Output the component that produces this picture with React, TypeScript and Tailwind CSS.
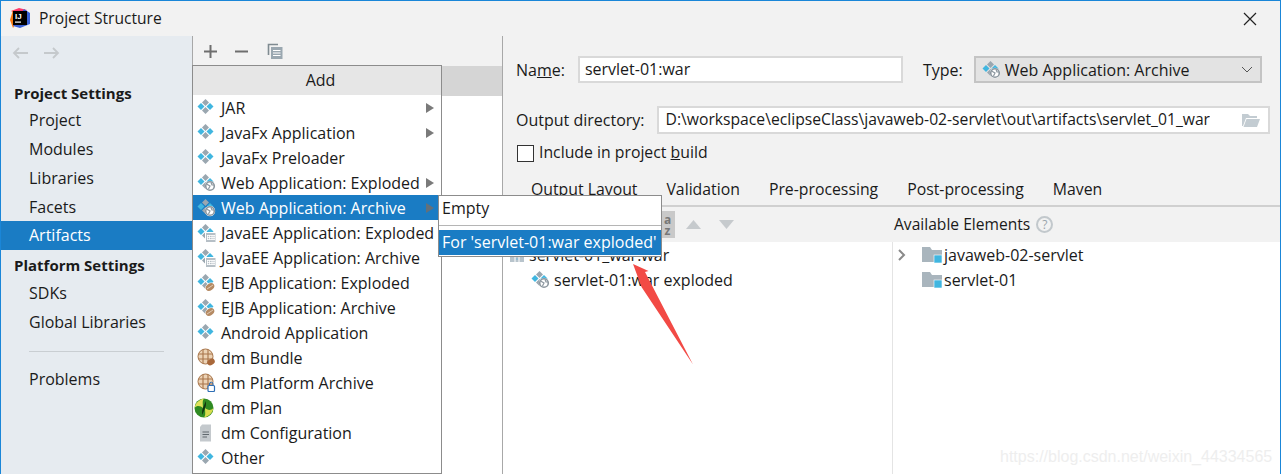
import React from "react";

const F = "font-['Open_Sans','Noto_Sans',sans-serif]";

function Diamonds() {
  const g = "#9aa7b0";
  const b = "#40b6e0";
  return (
    <g>
      <path d="M8.5 1 L12 4.5 L8.5 8 L5 4.5Z" fill={g} />
      <path d="M8.5 9 L12 12.5 L8.5 16 L5 12.5Z" fill={g} />
      <path d="M4 5 L7.5 8.5 L4 12 L0.5 8.5Z" fill={b} />
      <path d="M13 5 L16.5 8.5 L13 12 L9.5 8.5Z" fill={b} />
    </g>
  );
}

function Icon({ kind }: { kind: string }) {
  if (kind === "plan")
    return (
      <svg width="20" height="20" viewBox="0 0 20 20" className="shrink-0 -ml-[3px] mr-[1px]">
        <circle cx="10" cy="10" r="9.5" fill="#2f8a22" />
        <path d="M10 .5 C5 1.5 1.5 5 .5 10 C3 7 7 8 9 10 C9 6 8 3 10 .5Z" fill="#dfe25a" />
        <path d="M10 19.5 C15 18.5 18.5 15 19.5 10 C17 13 13 12 11 10 C11 14 12 17 10 19.5Z" fill="#d7dc4e" />
        <path d="M9 10 C10 7 11 5 12 3 C12 7 12 8 11 10 C10 13 9 15 8 17 C8 14 8 12 9 10Z" fill="#10330f" />
      </svg>
    );
  if (kind === "conf")
    return (
      <svg width="17" height="18" viewBox="0 0 17 18" className="shrink-0">
        <path d="M5 0.5 H14 V17.5 H3 V3Z" fill="#c4c9cd" />
        <path d="M5.5 8 H12 M5.5 10.5 H12 M5.5 13 H10" stroke="#60686e" strokeWidth="1.1" />
      </svg>
    );
  if (kind === "bundle" || kind === "platform")
    return (
      <svg width="19" height="19" viewBox="0 0 19 19" className="shrink-0">
        <circle cx="8.5" cy="8.5" r="7.5" fill="#ecd3b6" stroke="#a8754a" strokeWidth="1" />
        <path d="M6 1.5 V15.5 M11 1.5 V15.5 M1.5 6 H15.5 M1.5 11 H15.5" stroke="#a8754a" strokeWidth="1.1" />
        {kind === "bundle" ? (
          <ellipse cx="14" cy="14" rx="4" ry="3" fill="#a9683a" transform="rotate(-30 14 14)" />
        ) : (
          <g>
            <rect x="11" y="12.5" width="6.5" height="6" rx="1" fill="#fff" stroke="#2f6fb5" strokeWidth="1.2" />
            <path d="M12.5 12.5 V11 a1.8 1.8 0 0 1 3.6 0 V12.5" fill="none" stroke="#2f6fb5" />
          </g>
        )}
      </svg>
    );
  return (
    <svg width="19" height="19" viewBox="0 0 19 19" className="shrink-0">
      <Diamonds />
      {kind === "web" && (
        <g>
          <circle cx="13" cy="13" r="5.2" fill="#fff" />
          <circle cx="13" cy="13" r="4.3" fill="none" stroke="#8c979f" strokeWidth="1.6" />
          <path d="M9.5 11 L13 13 L11.5 16 M14 9.5 L15 12 L17 12" stroke="#8c979f" strokeWidth="1.2" fill="none" />
        </g>
      )}
      {kind === "ee" && (
        <g>
          <rect x="8" y="9" width="10.5" height="10" fill="#fff" />
          <rect x="9" y="10" width="9.5" height="9" fill="#b6bfc6" />
          <path d="M10.5 12 V17 M12.5 12 V17 M15 12 V17 M17 12 V17 M10 12.5 H18 M10 14.5 H18 M10 16.5 H18" stroke="#fff" strokeWidth="0.8" />
        </g>
      )}
      {kind === "ejb" && (
        <g>
          <ellipse cx="13" cy="14" rx="5.2" ry="4" fill="#fff" transform="rotate(-35 13 14)" />
          <ellipse cx="13" cy="14" rx="4.6" ry="3.4" fill="#b58a63" transform="rotate(-35 13 14)" />
          <path d="M10 16 L16 12" stroke="#e6d3c0" strokeWidth="0.9" />
        </g>
      )}
    </svg>
  );
}

const menu: [string, string, boolean?][] = [
  ["JAR", "d", true],
  ["JavaFx Application", "d", true],
  ["JavaFx Preloader", "d"],
  ["Web Application: Exploded", "web", true],
  ["Web Application: Archive", "web", true],
  ["JavaEE Application: Exploded", "ee"],
  ["JavaEE Application: Archive", "ee"],
  ["EJB Application: Exploded", "ejb"],
  ["EJB Application: Archive", "ejb"],
  ["Android Application", "d"],
  ["dm Bundle", "bundle"],
  ["dm Platform Archive", "platform"],
  ["dm Plan", "plan"],
  ["dm Configuration", "conf"],
  ["Other", "d"],
];

function Side({ t, sel, short }: { t: string; sel?: boolean; short?: boolean }) {
  return (
    <div className={`${short ? "h-[28px]" : "h-[29px]"} leading-[28px] pl-[28px] text-[16px] ${sel ? "bg-[#1a7cc4] text-white" : "text-[#1a1a1a]"}`}>{t}</div>
  );
}

function Folder() {
  return (
    <svg width="21" height="17" viewBox="0 0 21 17" className="shrink-0">
      <path d="M0 1 H8 L10 4 H20 V16 H0Z" fill="#a9b5bd" />
      <rect x="12" y="9" width="8" height="8" fill="#40b6e0" stroke="#fff" strokeWidth="0.6" />
    </svg>
  );
}

export default function App() {
  return (
    <div className={`relative w-[1281px] h-[474px] overflow-hidden flex flex-col bg-[#f2f2f2] border-x border-x-[#1a86d8] border-t border-t-[#1a86d8] text-[#1a1a1a] ${F}`}>
      {/* title bar */}
      <div className="h-[35px] shrink-0 flex items-center pl-[9px] pr-[23px] bg-[#f2f2f2]">
        <svg width="21" height="21" viewBox="0 0 21 21" className="shrink-0">
          <path d="M1 3 L9 0 L17 2 L10 8Z" fill="#fd3a6a" />
          <path d="M0 12 L3 2 L9 10 L3 20Z" fill="#f97a12" />
          <path d="M14 1 L20 5 L20 16 L10 20 L3 18 Z" fill="#3a62d8" />
          <path d="M3 3 L17 3 L17 17 L3 17Z" fill="#000" />
          <text x="5" y="11" fontSize="8" fontWeight="700" fill="#fff" fontFamily="Liberation Sans, sans-serif">IJ</text>
          <rect x="5" y="13.5" width="6" height="1.2" fill="#fff" />
        </svg>
        <span className="ml-[8px] text-[15.6px]">Project Structure</span>
        <svg width="14" height="14" viewBox="0 0 14 14" className="ml-auto">
          <path d="M1 1 L13 13 M13 1 L1 13" stroke="#222" strokeWidth="1.2" />
        </svg>
      </div>

      <div className="flex-1 flex min-h-0">
        {/* sidebar */}
        <div className="w-[192px] shrink-0 bg-[#e6ebf0] border-r border-r-[#a8a8a8] flex flex-col">
          <div className="h-[30px] flex items-center pl-[11px] gap-[16px] pt-[4px]">
            <svg width="16" height="14" viewBox="0 0 16 14"><path d="M16 7 H2 M7 2 L2 7 L7 12" stroke="#c5c9cc" strokeWidth="1.8" fill="none" /></svg>
            <svg width="16" height="14" viewBox="0 0 16 14"><path d="M0 7 H14 M9 2 L14 7 L9 12" stroke="#c5c9cc" strokeWidth="1.8" fill="none" /></svg>
          </div>
          <div className="mt-[12px] pl-[13px] text-[15px] font-bold leading-[30px] h-[28px]">Project Settings</div>
          <Side t="Project" />
          <Side t="Modules" />
          <Side t="Libraries" />
          <Side t="Facets" short />
          <Side t="Artifacts" sel />
          <div className="pl-[13px] text-[15px] font-bold leading-[30px] h-[29px]">Platform Settings</div>
          <Side t="SDKs" />
          <Side t="Global Libraries" />
          <div className="mx-[28px] mt-[14px] mb-[13px] h-px bg-[#c9ced2]" />
          <Side t="Problems" />
        </div>

        {/* middle */}
        <div className="w-[310px] shrink-0 bg-white border-r border-r-[#a8a8a8] flex flex-col">
          <div className="h-[30px] bg-[#f2f2f2] flex items-center pl-[9px] gap-[14px]">
            <svg width="17" height="17" viewBox="0 0 17 17"><path d="M8.5 2 V15 M2 8.5 H15" stroke="#6e6e6e" strokeWidth="2" /></svg>
            <svg width="17" height="17" viewBox="0 0 17 17"><path d="M2 8.5 H15" stroke="#6e6e6e" strokeWidth="2" /></svg>
            <svg width="17" height="17" viewBox="0 0 17 17" className="ml-[3px]"><path d="M1.5 12 V1.5 H11" fill="none" stroke="#7f8b91" strokeWidth="1.6" /><rect x="4" y="4" width="11.5" height="12" fill="#9aa7b0" /><path d="M6 7.5 H13.5 M6 10 H13.5 M6 12.5 H13.5" stroke="#fff" strokeWidth="1.1" /></svg>
          </div>
          <div className="h-[30px] bg-[#d5d5d5]" />
        </div>

        {/* right */}
        <div className="flex-1 flex flex-col min-w-0 text-[16px]">
          <div className="h-[169px] shrink-0 pl-[13px] pr-[10px] flex flex-col">
            <div className="mt-[20px] flex items-center h-[27px]">
              <span>Na<u>m</u>e:</span>
              <div className="ml-[13px] w-[325px] h-[27px] bg-white border-2 border-[#d9d9d9] pl-[5px] leading-[23px]">servlet-01:war</div>
              <span className="ml-[20px]">Type:</span>
              <div className="ml-[11px] w-[288px] h-[27px] bg-[#e3e3e3] border-2 border-[#c4c4c4] flex items-center pl-[6px]">
                <Icon kind="web" />
                <span className="ml-[4px]">Web Application: Archive</span>
                <svg width="12" height="8" viewBox="0 0 12 8" className="ml-auto mr-[7px]"><path d="M1 1 L6 6 L11 1" stroke="#555" fill="none" /></svg>
              </div>
            </div>
            <div className="mt-[23px] flex items-center h-[28px]">
              <span>Output directory:</span>
              <div className="ml-[12px] flex-1 h-[28px] bg-white border-2 border-[#d9d9d9] pl-[7px] pr-[8px] flex items-center">
                <span className="truncate text-[15.7px]">D:\workspace\eclipseClass\javaweb-02-servlet\out\artifacts\servlet_01_war</span>
                <svg width="18" height="14" viewBox="0 0 18 14" className="ml-auto shrink-0"><path d="M0 1 H6 L8 3 H15 V5 H4 L1 13 H0Z" fill="#c3ccd2" /><path d="M4.5 6 H18 L15 14 H1.5Z" fill="#c3ccd2" /></svg>
              </div>
            </div>
            <div className="mt-[10px] ml-[1px] flex items-center h-[18px]">
              <div className="w-[17px] h-[17px] bg-white border border-[#333]" />
              <span className="ml-[5px] text-[15.8px]">Include in project <u>b</u>uild</span>
            </div>
            <div className="mt-[17px] flex pl-[15px] gap-[29px] h-[20px] leading-[20px] text-[15.8px]">
              <span>Output Layout</span>
              <span>Validation</span>
              <span>Pre-processing</span>
              <span>Post-processing</span>
              <span>Maven</span>
            </div>
          </div>
          <div className="border-t-2 border-t-[#d0d0d0] flex-1 flex flex-col min-h-0">
            <div className="h-[35px] shrink-0 flex">
              <div className="w-[390px] flex items-center pl-[172px] gap-[11px]">
                <div className="w-[15px] h-[27px] bg-[#c9c9c9] -ml-[15px] text-[12px] leading-[11px] font-bold text-[#777] text-center pt-[3px]">a<br />z</div>
                <svg width="15" height="9" viewBox="0 0 15 9"><path d="M7.5 0 L15 9 H0Z" fill="#c6cacd" /></svg>
                <svg width="15" height="9" viewBox="0 0 15 9" className="ml-[7px]"><path d="M0 0 H15 L7.5 9Z" fill="#c6cacd" /></svg>
              </div>
              <div className="flex items-center pl-[1px]">
                <span className="text-[15.6px]">Available Elements</span>
                <span className="ml-[6px] w-[17px] h-[17px] rounded-full border-2 border-[#c2c8cc] text-[12px] leading-[13px] text-[#9aa4ab] text-center">?</span>
              </div>
            </div>
            <div className="flex-1 bg-white flex">
              <div className="w-[390px] border-r border-r-[#e4e4e4]">
                <div className="h-[25px] flex items-center pl-[6px]">
                  <svg width="16" height="16" viewBox="0 0 16 16" className="shrink-0"><rect x="1" y="1" width="14" height="14" fill="#b8c4cc" /><path d="M6 1 V15 M10 1 V15" stroke="#fff" /><path d="M7 3 H9 M7 6 H9 M7 9 H9 M7 12 H9" stroke="#6db6dc" strokeWidth="1.2" /></svg>
                  <span className="ml-[4px]">servlet-01_war.war</span>
                </div>
                <div className="h-[25px] flex items-center pl-[28px]">
                  <Icon kind="web" />
                  <span className="ml-[4px]">servlet-01:war exploded</span>
                </div>
              </div>
              <div className="flex-1">
                <div className="h-[25px] flex items-center pl-[4px]">
                  <svg width="10" height="12" viewBox="0 0 10 12" className="shrink-0"><path d="M2 1 L7 6 L2 11" stroke="#8a8a8a" strokeWidth="2" fill="none" /></svg>
                  <span className="ml-[15px] flex items-center"><Folder /><span className="ml-[1px]">javaweb-02-servlet</span></span>
                </div>
                <div className="h-[25px] flex items-center pl-[29px]">
                  <Folder />
                  <span className="ml-[1px]">servlet-01</span>
                </div>
              </div>
            </div>
          </div>
        </div>
      </div>

      {/* Add popup */}
      <div className="absolute left-[191px] top-[64px] w-[250px] h-[409px] bg-white border border-[#8c8c8c] text-[16px]">
        <div className="h-[29px] bg-[#e6e6e6] text-center leading-[28px] pl-[7px]">Add</div>
        {menu.map(([t, k, arrow], i) => {
          const sel = i === 4;
          return (
            <div key={t} className={`h-[25px] flex items-center pl-[4px] ${sel ? "bg-[#1a7cc4] text-white" : ""}`}>
              <span className="w-[18px] h-[19px] flex items-center shrink-0"><Icon kind={k} /></span>
              <span className="ml-[6px] whitespace-nowrap">{t}</span>
              {arrow && (
                <svg width="8" height="10" viewBox="0 0 8 10" className="ml-auto mr-[7px] shrink-0"><path d="M0 0 L8 5 L0 10Z" fill={sel ? "#63707a" : "#7a7a7a"} /></svg>
              )}
            </div>
          );
        })}
      </div>

      {/* submenu */}
      <div className="absolute left-[437px] top-[194px] w-[224px] h-[62px] bg-white border border-[#8c8c8c] text-[16px]">
        <div className="h-[29px] leading-[25px] pl-[3px]">Empty</div>
        <div className="h-px bg-[#b5b5b5]" />
        <div className="mt-[4px] h-[25px] leading-[24px] pl-[3px] bg-[#1a7cc4] text-white whitespace-nowrap">For 'servlet-01:war exploded'</div>
      </div>

      {/* red arrow annotation */}
      <svg width="70" height="110" viewBox="0 0 70 110" className="absolute left-[631px] top-[261px]">
        <path d="M1 2 L16.5 9 L13 10 L61 102.5 L9.5 25Z" fill="#f24a45" />
      </svg>

      <div className="absolute left-[999px] top-[444px] text-[16px] text-[#eeeeee] font-['Liberation_Sans',sans-serif]">https://blog.csdn.net/weixin_44334565</div>
    </div>
  );
}
